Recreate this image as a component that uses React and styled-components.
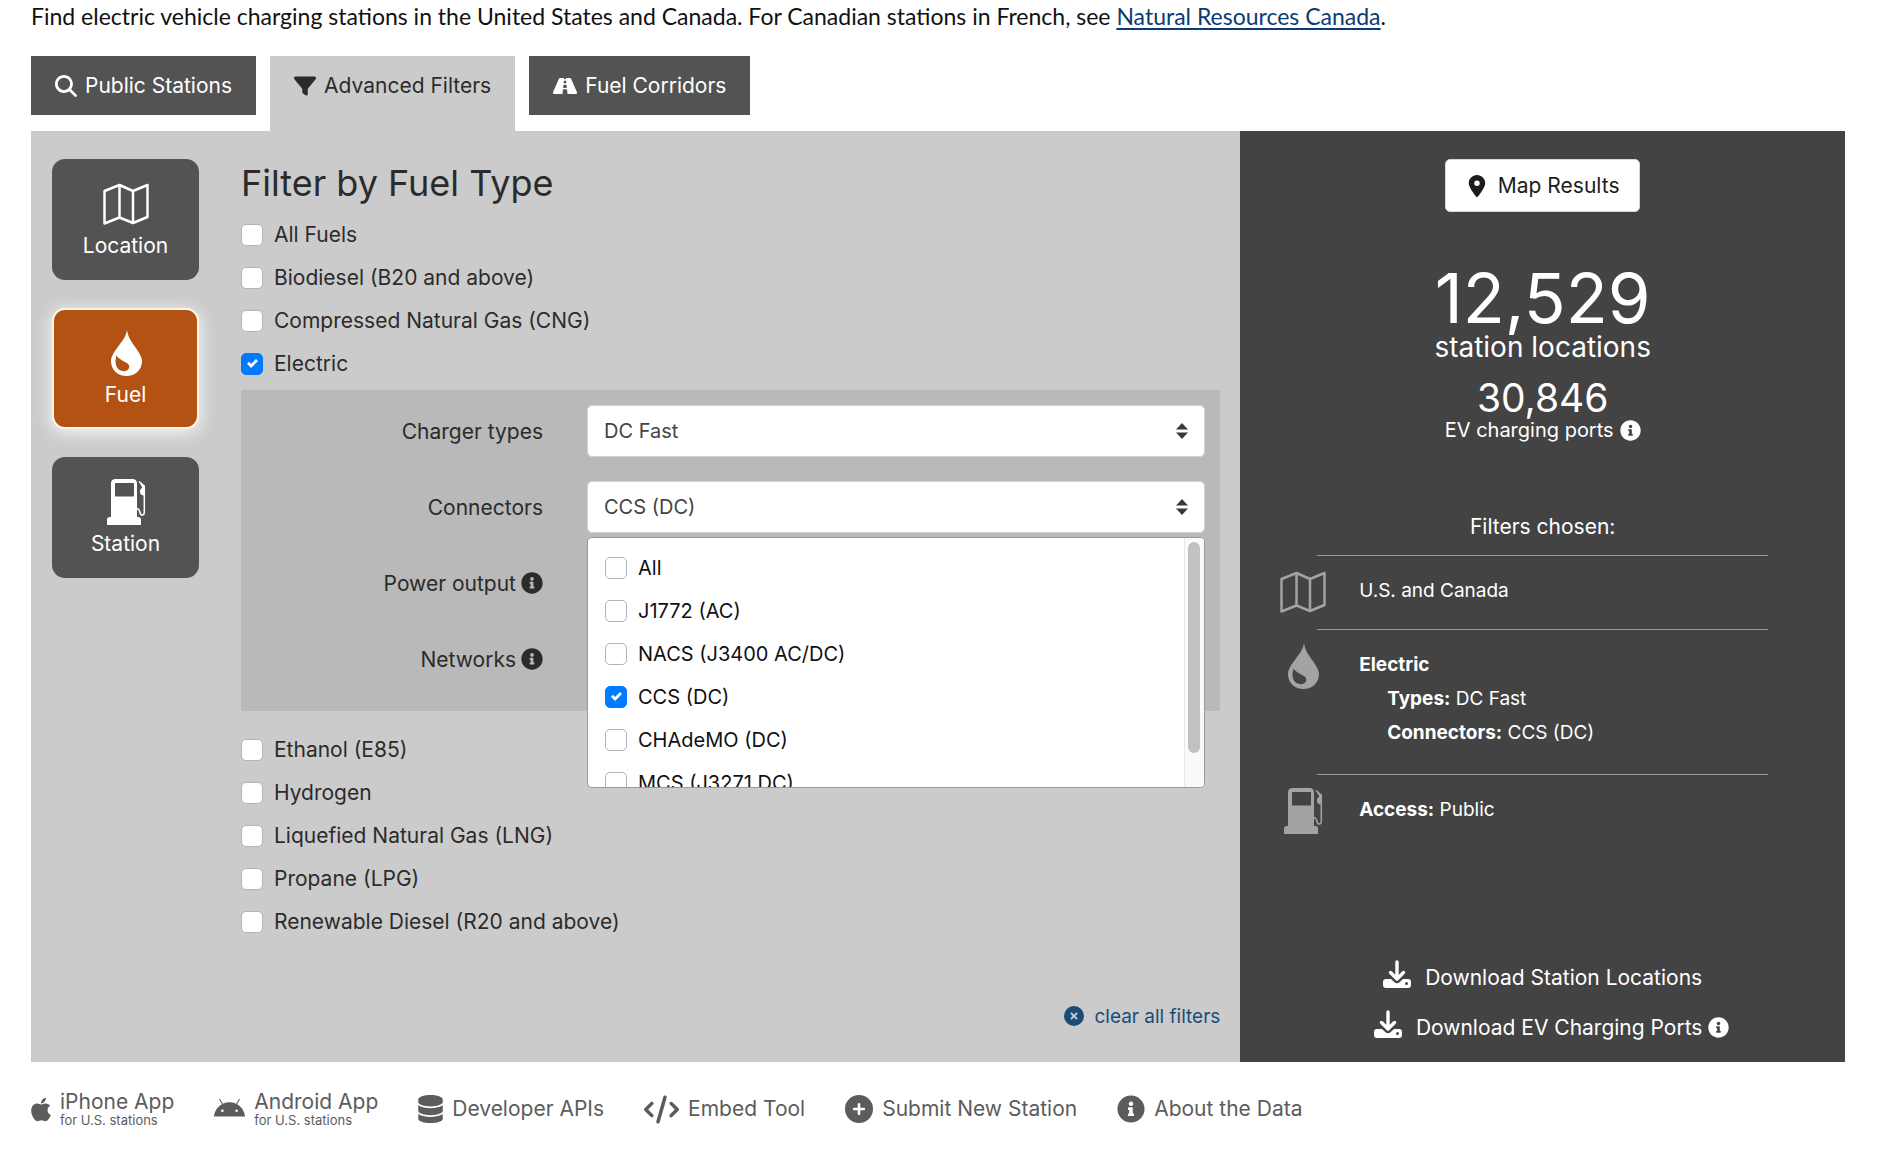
import React, { useState } from 'react';
import styled, { createGlobalStyle, css } from 'styled-components';
import { FaRoad, FaApple, FaInfoCircle } from 'react-icons/fa';
import {
    FaMagnifyingGlass,
    FaFilter,
    FaLocationDot,
    FaDatabase,
    FaCode,
    FaCirclePlus,
    FaCircleXmark,
    FaAndroid,
} from 'react-icons/fa6';

const GlobalStyle = createGlobalStyle`
    * {
        box-sizing: border-box;
    }

    body {
        margin: 0;
        background: #fff;
        color: #2b2b2b;
        font-family: Inter, "Liberation Sans", sans-serif;
        font-size: 21px;
    }

    button,
    input,
    select {
        margin: 0;
        font: inherit;
        color: inherit;
    }
`;

const Page = styled.div`
    padding: 0 55px 0 31px;
`;

const Intro = styled.p`
    margin: 0 0 24px;
    color: #111;
    font-family: Lato, sans-serif;
    font-size: 23px;
    line-height: 32px;

    a {
        color: #0b3a75;
        text-decoration-thickness: 2px;
        text-underline-offset: 3px;
    }
`;

const Tabs = styled.nav`
    display: flex;
    align-items: flex-start;
    gap: 14px;
`;

const Tab = styled.button`
    display: flex;
    align-items: center;
    gap: 8px;
    height: 59px;
    padding: 0 24px;
    border: 0;
    background: #535353;
    color: #fff;
    cursor: pointer;

    ${({ $active }) => $active && css`
        height: 75px;
        padding-bottom: 16px;
        background: #cbcbcb;
        color: #2b2b2b;
    `}
`;

const Panel = styled.main`
    display: grid;
    grid-template-columns: 2fr 1fr;
`;

const Filters = styled.section`
    display: flex;
    gap: 42px;
    min-width: 0;
    padding: 28px 20px 31px 21px;
    background: #cbcbcb;
`;

const SideNav = styled.nav`
    display: flex;
    flex-direction: column;
    flex: none;
    gap: 28px;
    width: 147px;
`;

const SideButton = styled.button`
    display: flex;
    flex-direction: column;
    align-items: center;
    justify-content: center;
    gap: 6px;
    height: 121px;
    padding: 0;
    border: 0;
    border-radius: 13px;
    background: #535353;
    color: #fff;
    line-height: 26px;
    cursor: pointer;

    ${({ $active }) => $active && css`
        border: 2px solid #fff7ee;
        background: #b45213;
        box-shadow: 0 3px 16px 2px rgba(255, 255, 255, 0.75);
    `}
`;

const FilterForm = styled.form`
    flex: 1;
    min-width: 0;
`;

const Title = styled.h1`
    margin: 0;
    padding-bottom: 6px;
    font-size: 36px;
    font-weight: 400;
    line-height: 48px;
`;

const CheckRow = styled.label`
    display: flex;
    align-items: center;
    gap: 11px;
    height: 43px;
    white-space: nowrap;
    cursor: pointer;
`;

const CheckBox = styled.span`
    display: grid;
    flex: none;
    place-items: center;
    width: 22px;
    height: 22px;

    > * {
        grid-area: 1 / 1;
    }

    input {
        appearance: none;
        width: 22px;
        height: 22px;
        border: 1px solid #adb5bd;
        border-radius: 5px;
        background: #fff;
    }

    input:checked {
        border-color: #007bff;
        background: #007bff;
    }

    svg {
        display: none;
        pointer-events: none;
    }

    input:checked + svg {
        display: block;
    }
`;

const ElectricBox = styled.div`
    display: flex;
    flex-direction: column;
    gap: 24px;
    margin: 5px 0 17px;
    padding: 15px 15px 26px;
    background: #b9b9b9;
`;

const Field = styled.div`
    display: grid;
    grid-template-columns: 287px 1fr;
    column-gap: 44px;
    align-items: center;
`;

const FieldLabel = styled.label`
    display: flex;
    align-items: center;
    justify-content: flex-end;
    gap: 5px;
`;

const SelectWrap = styled.div`
    position: relative;
    font-size: 20px;
`;

const Select = styled.select`
    appearance: none;
    display: block;
    width: 100%;
    height: 52px;
    padding: 0 44px 0 16px;
    border: 1px solid #ced4da;
    border-radius: 5px;
    background: #fff;
    color: #444;
`;

const Caret = styled.svg`
    position: absolute;
    top: 18px;
    right: 17px;
    width: 12px;
    height: 16px;
    fill: #343a40;
    pointer-events: none;
`;

const Menu = styled.div`
    position: absolute;
    z-index: 2;
    top: calc(100% + 4px);
    left: 0;
    display: flex;
    width: 100%;
    height: 251px;
    overflow: hidden;
    border: 1px solid #9a9a9a;
    border-radius: 5px;
    background: #fff;
    color: #111;
`;

const MenuList = styled.div`
    flex: 1;
    padding: 8px 17px;
    overflow-y: auto;
    scrollbar-width: none;
`;

const Track = styled.div`
    width: 20px;
    padding: 4px 3px;
    border-left: 1px solid #e8e8e8;
    background: #fafafa;
`;

const Thumb = styled.div`
    width: 12px;
    height: 211px;
    border-radius: 6px;
    background: #c1c1c1;
`;

const ClearRow = styled.div`
    display: flex;
    justify-content: flex-end;
    margin-top: 58px;
`;

const PlainButton = styled.button`
    display: flex;
    align-items: center;
    gap: ${({ $gap }) => $gap}px;
    height: 30px;
    padding: 0;
    border: 0;
    background: none;
    color: ${({ $color }) => $color};
    font-size: ${({ $size }) => $size}px;
    white-space: nowrap;
    cursor: pointer;
`;

const Summary = styled.aside`
    display: flex;
    flex-direction: column;
    align-items: center;
    min-width: 0;
    padding: 28px 40px 20px;
    background: #434343;
    color: #fff;
`;

const MapButton = styled.button`
    display: flex;
    align-items: center;
    gap: 10px;
    height: 53px;
    padding: 0 20px;
    border: 1px solid #d6d6d6;
    border-radius: 5px;
    background: #fff;
    color: #1c1c1c;
    cursor: pointer;
`;

const BigCount = styled.div`
    margin-top: 51px;
    font-size: 69px;
    line-height: 70px;
`;

const CountLabel = styled.div`
    font-size: 28px;
    line-height: 28px;
`;

const SmallCount = styled.div`
    margin-top: 18px;
    font-size: 39px;
    line-height: 38px;
`;

const PortsLabel = styled.div`
    display: flex;
    align-items: center;
    gap: 6px;
    font-size: 20px;
    line-height: 26px;
`;

const ChosenTitle = styled.h2`
    margin: 70px 0 14px;
    font-size: 21px;
    font-weight: 400;
    line-height: 28px;
`;

const ChosenList = styled.ul`
    width: 451px;
    max-width: 100%;
    margin: 0;
    padding: 0;
    list-style: none;
    font-size: 19px;
    line-height: 34px;
`;

const ChosenItem = styled.li`
    display: flex;
    gap: 33px;
    height: ${({ $height }) => $height}px;
    padding-top: 18px;
    border-top: 1px solid #999;

    svg {
        flex: none;
        margin: -5px 0 0 -37px;
        color: #a3a3a3;
    }
`;

const Indented = styled.div`
    padding-left: 28px;
`;

const Downloads = styled.div`
    display: flex;
    flex-direction: column;
    align-items: center;
    gap: 20px;
    margin-top: auto;

    button svg {
        margin-bottom: 6px;
    }
`;

const PortsDownload = styled.div`
    display: flex;
    align-items: center;
    gap: 6px;
    padding-left: 18px;
`;

const Footer = styled.footer`
    display: flex;
    gap: 40px;
    height: 94px;
    color: #5c5c5c;
`;

const FooterLink = styled.a`
    display: flex;
    align-items: center;
    gap: 9px;
    color: inherit;
    line-height: 22px;
    text-decoration: none;
    white-space: nowrap;

    small {
        display: block;
        font-size: 13px;
        line-height: 14px;
    }
`;

const AppleIcon = styled(FaApple)`
    width: 20px;
    height: 27px;
`;

const DataIcon = styled(FaDatabase)`
    width: 25px;
    height: 28px;
`;

const MapIcon = () => (
    <svg width="46" height="46" viewBox="0 0 46 46" fill="none" stroke="currentColor" strokeWidth="2.500" strokeLinejoin="round" aria-hidden="true">
        <path d="M1.500 10 16.500 4v32.500L1.500 42.500zM16.500 4 30 10v32L16.500 36.500M30 10 44.500 4v32L30 42" />
    </svg>
);

const DropIcon = () => (
    <svg width="46" height="46" viewBox="0 0 46 46" fill="currentColor" aria-hidden="true">
        <path
            fillRule="evenodd"
            d="M24 0c1 7 4 11 8.500 17.500C36 22.500 39 27 39 31c0 9-7 15-15.500 15S8 40 8 31c0-4 3-9 6.500-13.500C19 11 23 7 24 0zM13.500 25.500c-2 6-1 12 3 14.500 4 2.300 9 1 9.700-2.500.6-3.200-2.200-4.500-6-6.500-3-1.600-5-3-6.700-5.500z"
        />
    </svg>
);

const PumpIcon = () => (
    <svg width="46" height="46" viewBox="0 0 46 46" fill="currentColor" aria-hidden="true">
        <path
            fillRule="evenodd"
            d="M8 4.500C8 1.500 9.500 0 12.500 0h17C32.500 0 34 1.500 34 4.500V38h1.500c1.500 0 2.500 1 2.500 2.500V46H4v-5.500C4 39 5 38 6.500 38H8zm5-.5c-.7 0-1 .3-1 1v11.500c0 .7.3 1 1 1h17c.7 0 1-.3 1-1V5c0-.7-.3-1-1-1z"
        />
        <path d="M36 2.500 41.500 7v9.500c-3 .2-4.600-1.500-4.600-4 0-1.900 1-2.900 2.400-3.700z" />
        <path d="M36 2.500 41.300 7v26c0 2.200-.8 3-2 3s-2-.8-2.300-2.500c-.4-2-1.200-3.500-3-4" fill="none" stroke="currentColor" strokeWidth="1.500" />
    </svg>
);

const DownloadIcon = () => (
    <svg width="28" height="28" viewBox="0 0 28 28" aria-hidden="true">
        <path
            fill="currentColor"
            fillRule="evenodd"
            d="M3 19h5l3.500 3.300c1.500 1.400 3.500 1.400 5 0L20 19h5c2 0 3 1.200 3 3v3c0 2-1 3-3 3H3c-2 0-3-1-3-3v-3c0-1.800 1-3 3-3zm20.500 3a1.500 1.500 0 1 0 0 3 1.500 1.500 0 0 0 0-3z"
        />
        <path d="M14 2v17M7.500 12.500 14 19l6.500-6.500" fill="none" stroke="currentColor" strokeWidth="3.400" strokeLinecap="round" strokeLinejoin="round" />
    </svg>
);

const CheckItem = ({ label, checked }) => (
    <CheckRow>
        <CheckBox>
            <input type="checkbox" defaultChecked={checked} />
            <svg width="11" height="11" viewBox="0 0 8 8" fill="#fff" aria-hidden="true">
                <path d="M6.564.75l-3.590 3.612-1.538-1.550L0 4.260l2.974 2.990L8 2.193z" />
            </svg>
        </CheckBox>
        {label}
    </CheckRow>
);

const SelectField = ({ id, label, info, value, children }) => (
    <Field>
        <FieldLabel htmlFor={id}>
            {label}
            {info && <FaInfoCircle size={22} />}
        </FieldLabel>
        <SelectWrap>
            <Select id={id} defaultValue={value}>
                <option>{value}</option>
            </Select>
            <Caret viewBox="0 0 4 5" preserveAspectRatio="none" aria-hidden="true">
                <path d="M2 0L0 2h4zm0 5L0 3h4z" />
            </Caret>
            {children}
        </SelectWrap>
    </Field>
);

const fuelsBefore = ['All Fuels', 'Biodiesel (B20 and above)', 'Compressed Natural Gas (CNG)', 'Electric'];
const fuelsAfter = ['Ethanol (E85)', 'Hydrogen', 'Liquefied Natural Gas (LNG)', 'Propane (LPG)', 'Renewable Diesel (R20 and above)'];
const connectors = ['All', 'J1772 (AC)', 'NACS (J3400 AC/DC)', 'CCS (DC)', 'CHAdeMO (DC)', 'MCS (J3271 DC)'];

export default function App() {
    const [scroll, setScroll] = useState(0);
    const [section, setSection] = useState('Fuel');

    // keep the thumb in step with the list
    const handleScroll = (e) => {
        const { scrollTop, scrollHeight, clientHeight } = e.currentTarget;
        setScroll((scrollTop / (scrollHeight - clientHeight)) * (clientHeight - 219));
    };

    const sections = [
        { name: 'Location', icon: <MapIcon /> },
        { name: 'Fuel', icon: <DropIcon /> },
        { name: 'Station', icon: <PumpIcon /> },
    ];

    return (
        <Page>
            <GlobalStyle />
            <Intro>
                Find electric vehicle charging stations in the United States and Canada. For Canadian stations in French, see{' '}
                <a href="#nrcan">Natural Resources Canada</a>.
            </Intro>

            <Tabs>
                <Tab type="button"><FaMagnifyingGlass size={22} />Public Stations</Tab>
                <Tab type="button" $active><FaFilter size={22} />Advanced Filters</Tab>
                <Tab type="button"><FaRoad size={24} />Fuel Corridors</Tab>
            </Tabs>

            <Panel>
                <Filters>
                    <SideNav>
                        {sections.map(({ name, icon }) => (
                            <SideButton key={name} type="button" $active={section === name} onClick={() => setSection(name)}>
                                {icon}
                                {name}
                            </SideButton>
                        ))}
                    </SideNav>

                    <FilterForm>
                        <Title>Filter by Fuel Type</Title>
                        {fuelsBefore.map((fuel) => (
                            <CheckItem key={fuel} label={fuel} checked={fuel === 'Electric'} />
                        ))}
                        <ElectricBox>
                            <SelectField id="charger" label="Charger types" value="DC Fast" />
                            <SelectField id="connector" label="Connectors" value="CCS (DC)">
                                <Menu>
                                    <MenuList onScroll={handleScroll}>
                                        {connectors.map((name) => (
                                            <CheckItem key={name} label={name} checked={name === 'CCS (DC)'} />
                                        ))}
                                    </MenuList>
                                    <Track>
                                        <Thumb style={{ marginTop: scroll }} />
                                    </Track>
                                </Menu>
                            </SelectField>
                            <SelectField id="power" label="Power output" info value="" />
                            <SelectField id="networks" label="Networks" info value="" />
                        </ElectricBox>
                        {fuelsAfter.map((fuel) => (
                            <CheckItem key={fuel} label={fuel} />
                        ))}
                        <ClearRow>
                            <PlainButton type="reset" $gap={10} $size={19} $color="#1b4b76">
                                <FaCircleXmark size={20} />
                                clear all filters
                            </PlainButton>
                        </ClearRow>
                    </FilterForm>
                </Filters>

                <Summary>
                    <MapButton type="button"><FaLocationDot size={22} />Map Results</MapButton>
                    <BigCount>12,529</BigCount>
                    <CountLabel>station locations</CountLabel>
                    <SmallCount>30,846</SmallCount>
                    <PortsLabel>EV charging ports <FaInfoCircle size={21} /></PortsLabel>

                    <ChosenTitle>Filters chosen:</ChosenTitle>
                    <ChosenList>
                        <ChosenItem $height={74}>
                            <MapIcon />
                            <div>U.S. and Canada</div>
                        </ChosenItem>
                        <ChosenItem $height={145}>
                            <DropIcon />
                            <div>
                                <b>Electric</b>
                                <Indented><b>Types:</b> DC Fast</Indented>
                                <Indented><b>Connectors:</b> CCS (DC)</Indented>
                            </div>
                        </ChosenItem>
                        <ChosenItem $height={74}>
                            <PumpIcon />
                            <div><b>Access:</b> Public</div>
                        </ChosenItem>
                    </ChosenList>

                    <Downloads>
                        <PlainButton type="button" $gap={14} $size={21} $color="#fff">
                            <DownloadIcon />
                            Download Station Locations
                        </PlainButton>
                        <PortsDownload>
                            <PlainButton type="button" $gap={14} $size={21} $color="#fff">
                                <DownloadIcon />
                                Download EV Charging Ports
                            </PlainButton>
                            <FaInfoCircle size={21} />
                        </PortsDownload>
                    </Downloads>
                </Summary>
            </Panel>

            <Footer>
                <FooterLink href="#iphone">
                    <AppleIcon />
                    <span>iPhone App<small>for U.S. stations</small></span>
                </FooterLink>
                <FooterLink href="#android">
                    <FaAndroid size={31} />
                    <span>Android App<small>for U.S. stations</small></span>
                </FooterLink>
                <FooterLink href="#api"><DataIcon />Developer APIs</FooterLink>
                <FooterLink href="#embed"><FaCode size={35} />Embed Tool</FooterLink>
                <FooterLink href="#submit"><FaCirclePlus size={28} />Submit New Station</FooterLink>
                <FooterLink href="#about"><FaInfoCircle size={28} />About the Data</FooterLink>
            </Footer>
        </Page>
    );
}
